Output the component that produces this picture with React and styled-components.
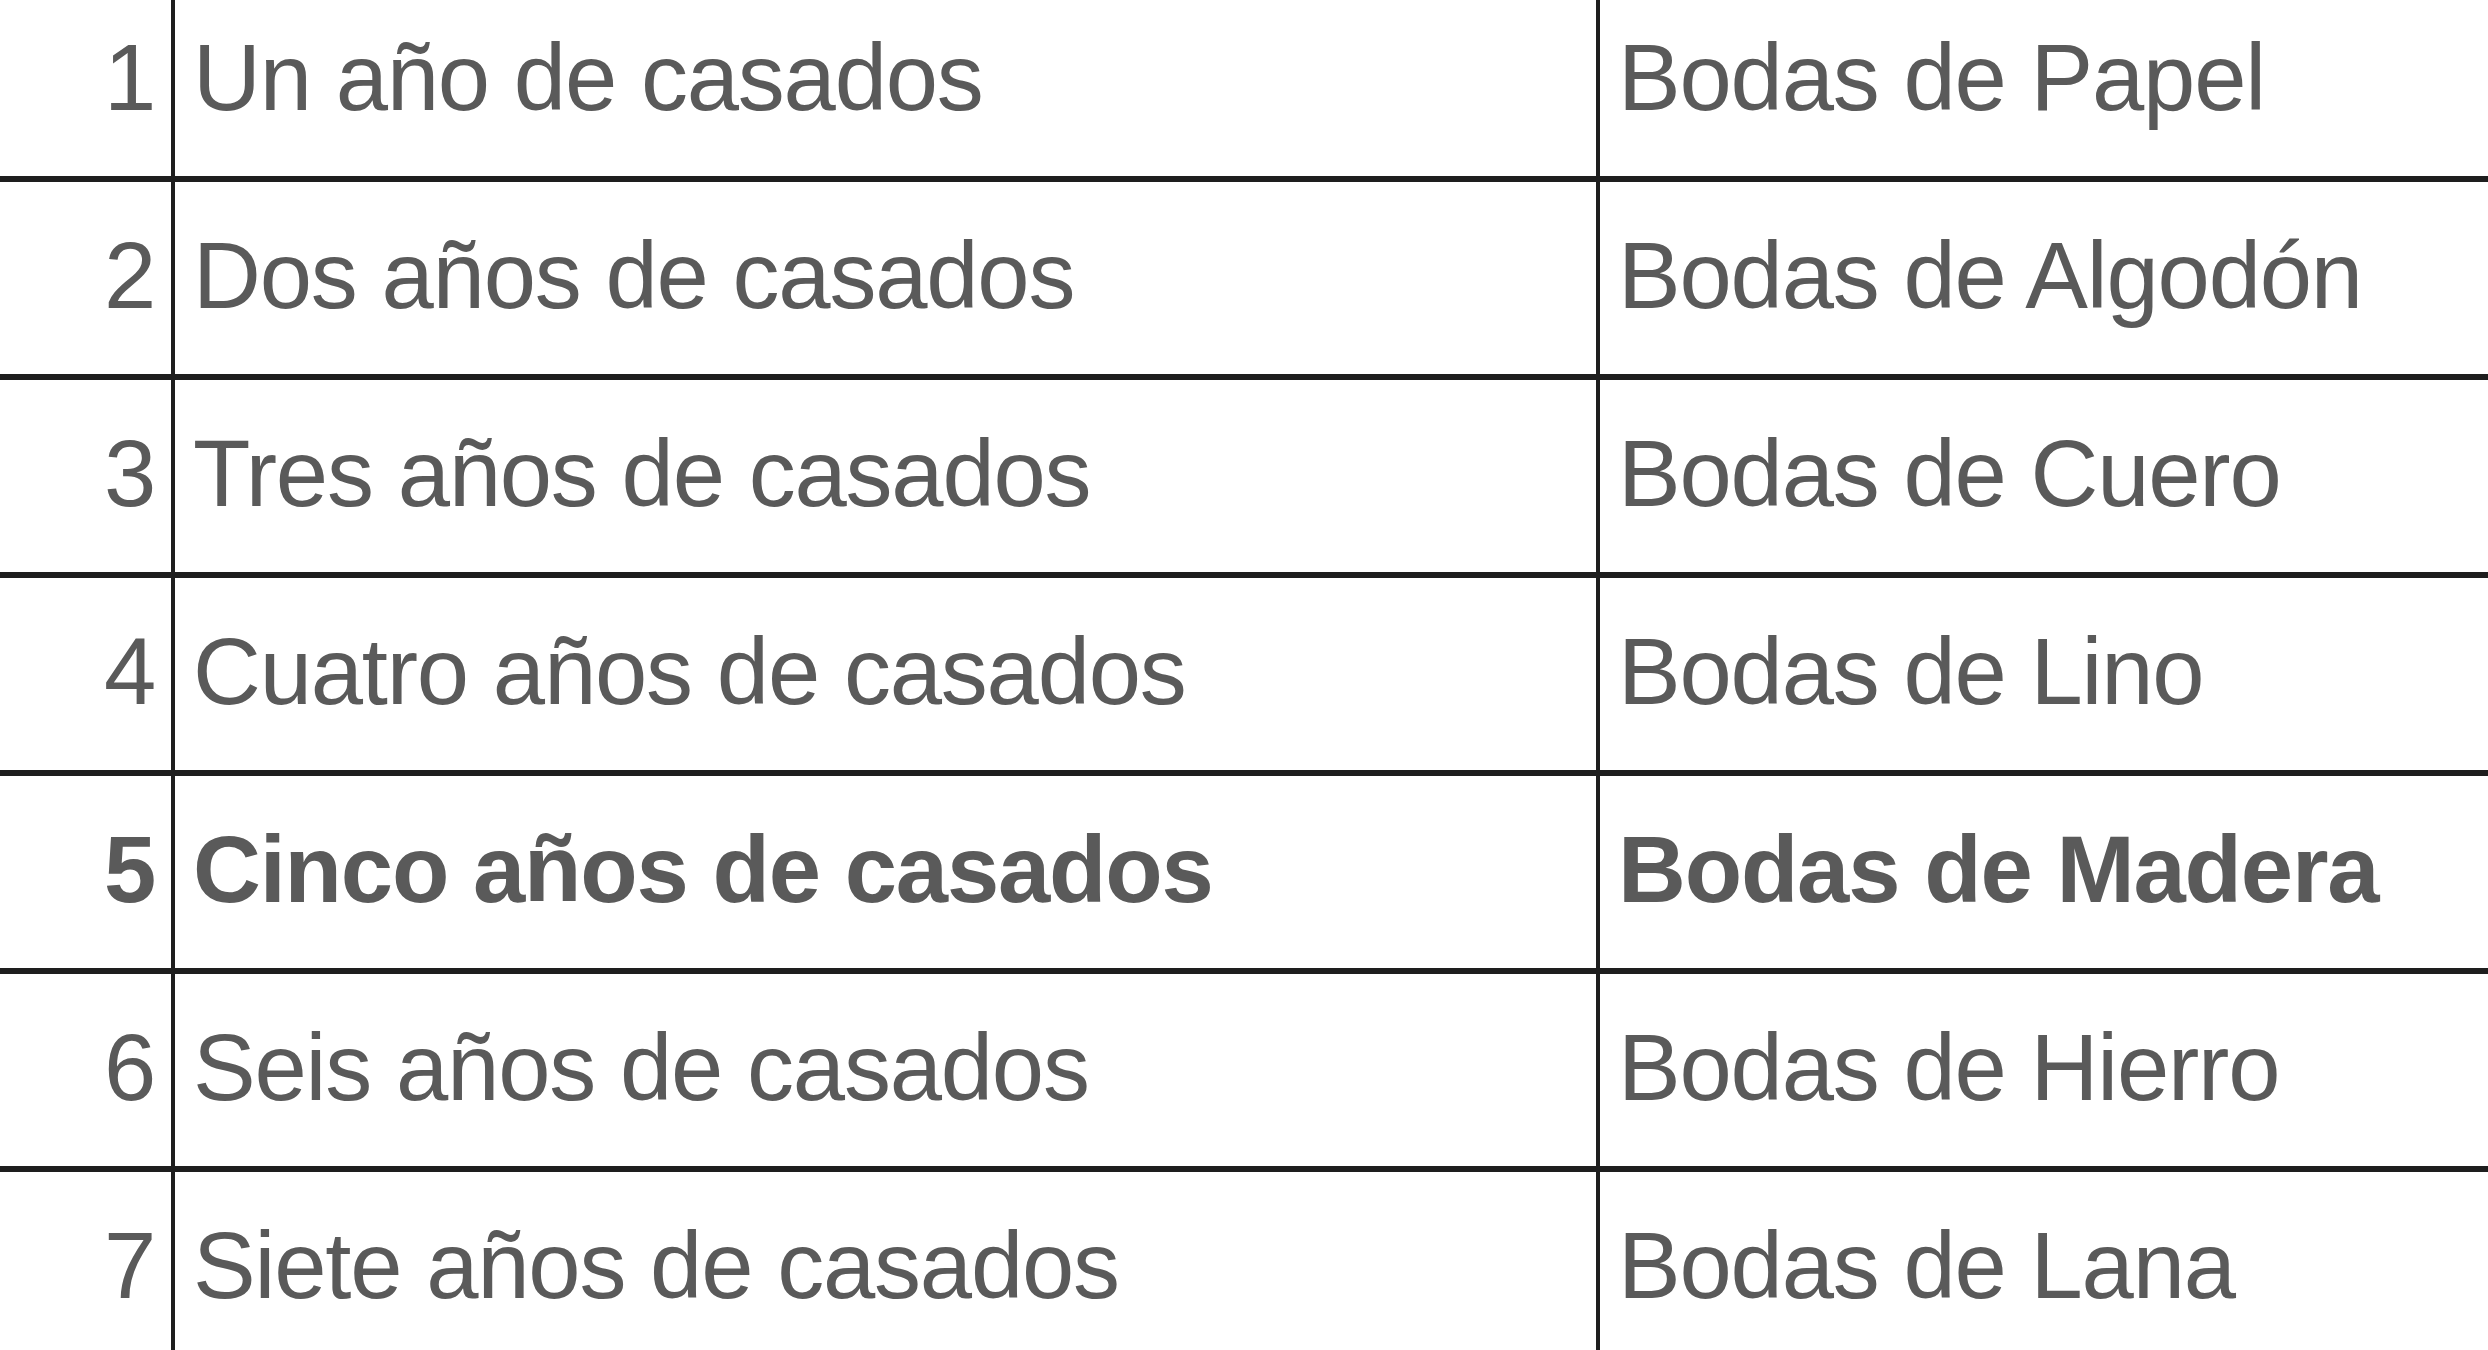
import styled, { createGlobalStyle } from "styled-components";

const GlobalStyle = createGlobalStyle`
  html, body {
    margin: 0;
    padding: 0;
    background: #fff;
    overflow: hidden;
  }
  body {
    font-family: "Liberation Sans", Arial, sans-serif;
  }
`;

const anniversaries = [
  { n: 1, years: "Un año de casados", name: "Bodas de Papel" },
  { n: 2, years: "Dos años de casados", name: "Bodas de Algodón" },
  { n: 3, years: "Tres años de casados", name: "Bodas de Cuero" },
  { n: 4, years: "Cuatro años de casados", name: "Bodas de Lino" },
  { n: 5, years: "Cinco años de casados", name: "Bodas de Madera", bold: true },
  { n: 6, years: "Seis años de casados", name: "Bodas de Hierro" },
  { n: 7, years: "Siete años de casados", name: "Bodas de Lana" },
];

const Table = styled.div`
  margin-top: -16px;
  width: 100%;
`;

const Row = styled.div`
  display: grid;
  grid-template-columns: 175px 1425px 1fr;
  height: 198px;
  box-sizing: border-box;
  border-bottom: 6px solid #1e1e1e;
`;

const Cell = styled.div`
  display: flex;
  align-items: center;
  justify-content: ${(p) => (p.$num ? "flex-end" : "flex-start")};
  padding: ${(p) => (p.$num ? "0 16px 5px 0" : "0 18px 5px")};
  box-sizing: border-box;
  border-right: ${(p) => (p.$last ? "none" : "4px solid #1e1e1e")};
  font-size: 94px;
  letter-spacing: -1.2px;
  color: #5a5a5a;
  font-weight: ${(p) => (p.$bold ? 700 : 400)};
  white-space: nowrap;
  overflow: hidden;
`;

export default function App() {
  return (
    <>
      <GlobalStyle />
      <Table>
        {anniversaries.map((a) => (
          <Row key={a.n}>
            <Cell $num $bold={a.bold}>{a.n}</Cell>
            <Cell $bold={a.bold}>{a.years}</Cell>
            <Cell $last $bold={a.bold}>{a.name}</Cell>
          </Row>
        ))}
      </Table>
    </>
  );
}
